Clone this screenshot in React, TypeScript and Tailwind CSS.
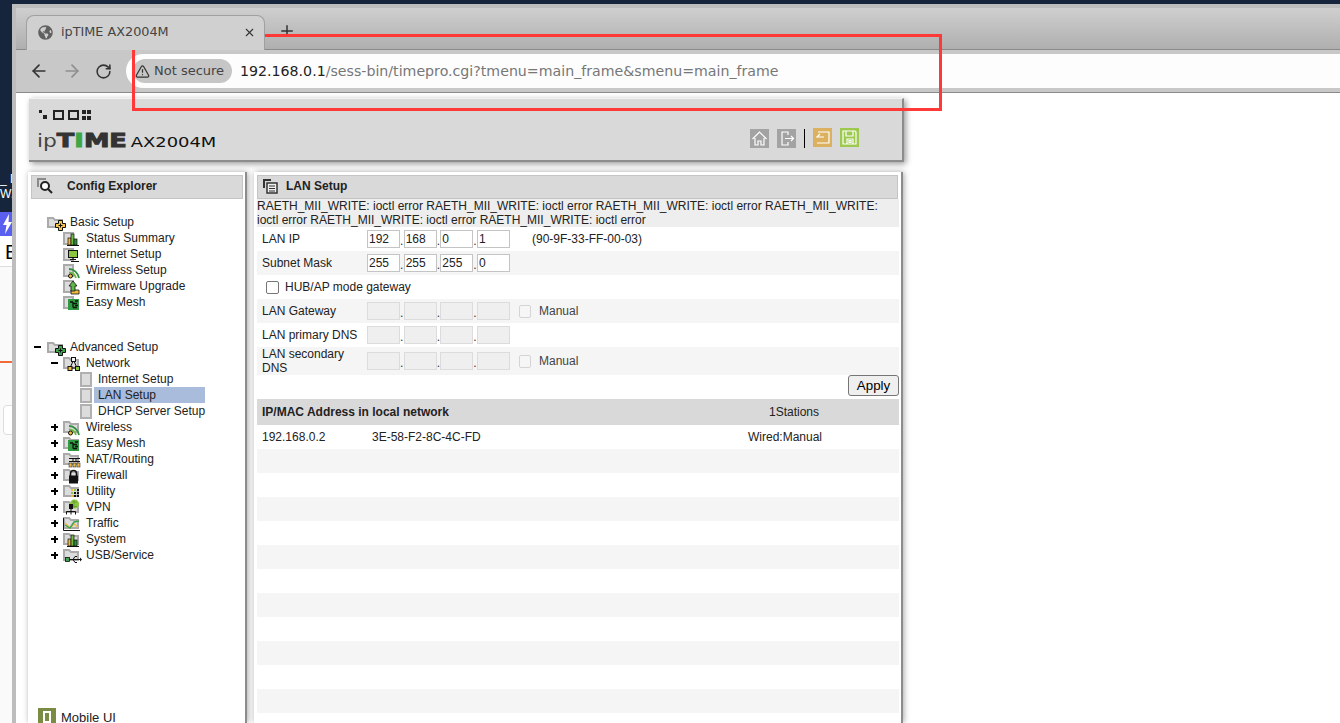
import { ArrowLeft, ArrowRight, Plus, RotateCw, TriangleAlert, X } from "lucide-react";
import { FaGlobeAmericas } from "react-icons/fa";
import type { ReactNode } from "react";

const ui = "font-['Liberation_Sans',Arial,sans-serif]";
const chrome = "font-['DejaVu_Sans',sans-serif]";

// small badges that sit on the corner of the tree folders
function Badge({ name }: { name: string }) {
  switch (name) {
    case "plus-yellow":
    case "plus-green":
      return (
        <g>
          <path
            d="M11.500 6.500h4v3h3v4h-3v3h-4v-3h-3v-4h3z"
            fill={name === "plus-yellow" ? "#f7c64a" : "#3fa34d"}
            stroke="#111"
          />
          <path d="M13.500 9.500v4M11.500 11.500h4" stroke="#111" />
        </g>
      );
    case "bars":
      return (
        <g stroke="#111" strokeWidth="0.700">
          <rect x="5" y="8" width="3" height="7" fill="#f0b840" />
          <rect x="8" y="4" width="3" height="11" fill="#6dbb45" />
          <rect x="11" y="9" width="3" height="6" fill="#2f8f3f" />
          <path d="M4 15.500h12" strokeWidth="1" />
        </g>
      );
    case "monitor":
      return (
        <g>
          <rect x="5.500" y="4.500" width="9" height="7" fill="#8cc63f" stroke="#111" />
          <path d="M10 12v1M7 13.500h6M8 15.500h8" stroke="#111" />
        </g>
      );
    case "wifi":
      return (
        <g fill="none">
          <path d="M6 7c5 0 9 4 10 9" stroke="#2f8f3f" strokeWidth="1.800" />
          <path d="M6 10.500c3 0 6 2 7 5.500" stroke="#6dbb45" strokeWidth="1.800" />
          <circle cx="7.500" cy="14" r="2" fill="#f0b840" stroke="#111" />
        </g>
      );
    case "upload":
      return (
        <g stroke="#111" strokeWidth="0.800">
          <path d="M10 12h6v4H8v-4z" fill="#f0b840" />
          <path d="M10 3l4 5h-2v5H8V8H6z" fill="#5cb848" />
        </g>
      );
    case "mesh":
      return (
        <g>
          <rect x="5" y="5" width="11" height="11" fill="#2f9a3f" />
          <path d="M7 8h3M10 8v5.500M10 9.500h4M10 13.500h4M12 7h3M12 11.500h3" stroke="#111" strokeWidth="1.300" />
        </g>
      );
    case "network":
      return (
        <g>
          <path d="M10.500 5L7 13M10.500 5L14 13M7 13h7" fill="none" stroke="#111" />
          <rect x="8.500" y="2.500" width="4" height="4" fill="#f5f5f5" stroke="#111" />
          <rect x="5" y="11.500" width="4" height="4" fill="#f0b840" stroke="#111" />
          <rect x="12.500" y="11.500" width="4" height="4" fill="#8cc63f" stroke="#111" />
        </g>
      );
    case "nat":
      return (
        <g>
          <path d="M6 7.500h11M6 10.500h11M10 7.500v3M13 7.500v3" stroke="#111" />
          <rect x="6" y="12" width="3" height="4" fill="#f0b840" stroke="#111" strokeWidth="0.500" />
          <rect x="10" y="12" width="3" height="4" fill="#f0b840" stroke="#111" strokeWidth="0.500" />
          <rect x="14" y="12" width="3" height="4" fill="#f0b840" stroke="#111" strokeWidth="0.500" />
        </g>
      );
    case "lock":
      return (
        <g>
          <path d="M7.500 9V6.500a3 3 0 016 0V9" fill="none" stroke="#111" strokeWidth="1.600" />
          <rect x="6" y="8.500" width="9" height="8" fill="#111" />
        </g>
      );
    case "dots":
      return (
        <g>
          <rect x="8" y="6" width="2" height="2" fill="#f0b840" />
          <rect x="11" y="6" width="2" height="2" fill="#8cc63f" />
          <rect x="14" y="6" width="2" height="2" fill="#111" />
          <rect x="8" y="9" width="2" height="2" fill="#8cc63f" />
          <rect x="11" y="9" width="2" height="2" fill="#111" />
          <rect x="14" y="9" width="2" height="2" fill="#111" />
          <rect x="8" y="12" width="2" height="2" fill="#f0b840" />
          <rect x="11" y="12" width="2" height="2" fill="#111" />
          <rect x="14" y="12" width="2" height="2" fill="#111" />
        </g>
      );
    case "vpn":
      return (
        <g>
          <circle cx="11.500" cy="5" r="4.500" fill="#8cc63f" />
          <path d="M8 7.500h6M9 3h5M11 1v8" stroke="#5a9a2f" strokeWidth="0.700" />
          <rect x="6" y="5" width="4" height="5" fill="#111" />
          <path d="M8 10v2M3.500 12.500h9M3.500 12.500v3M8 12.500v3M12.500 12.500v3" stroke="#111" />
        </g>
      );
    case "traffic":
      return (
        <g fill="none">
          <path d="M0.500 3v12.500H17" stroke="#111" />
          <path d="M2 8l5 5 4-4 4 3" stroke="#f0b840" strokeWidth="1.400" />
          <path d="M2 10l5 3 4-6 5-1" stroke="#3fa34d" strokeWidth="1.400" />
        </g>
      );
    case "usb":
      return (
        <g>
          <path d="M5 12.500h12M10 12.500l2-3h2M10 12.500l2 3h2" fill="none" stroke="#111" />
          <rect x="2.500" y="10.500" width="4" height="4" fill="#3fa34d" stroke="#111" strokeWidth="0.800" />
          <path d="M17 10.500l2 2-2 2z" fill="#111" />
        </g>
      );
    default:
      return null;
  }
}

const folderShapes = {
  top: "M1 4h5l2 2h7v7H1z",
  sub: "M1 3h5l2 2h7v8H1z",
  square: "M1 3h9v11H1z",
};

function FolderIcon({ badge, shape }: { badge: string; shape: keyof typeof folderShapes }) {
  return (
    <svg width="20" height="16" viewBox="0 0 20 16" className="shrink-0 overflow-visible">
      <path d={folderShapes[shape]} fill="#dcdcdc" stroke="#aaa" strokeWidth="2" />
      <Badge name={badge} />
    </svg>
  );
}

function PageIcon() {
  return <span className="w-[12px] h-[15px] shrink-0 bg-[#dcdcdc] border-2 border-[#b0b0b0]" />;
}

function Toggle({ kind }: { kind: "+" | "-" }) {
  return (
    <span className="relative w-[7px] h-[7px] shrink-0">
      <span className="absolute left-0 top-[2.500px] w-[7px] h-[2px] bg-black" />
      {kind === "+" && <span className="absolute left-[2.500px] top-0 w-[2px] h-[7px] bg-black" />}
    </span>
  );
}

const basicItems = [
  ["Status Summary", "bars"],
  ["Internet Setup", "monitor"],
  ["Wireless Setup", "wifi"],
  ["Firmware Upgrade", "upload"],
  ["Easy Mesh", "mesh"],
];

const advancedItems = [
  ["Wireless", "wifi"],
  ["Easy Mesh", "mesh"],
  ["NAT/Routing", "nat"],
  ["Firewall", "lock"],
  ["Utility", "dots"],
  ["VPN", "vpn"],
  ["Traffic", "traffic"],
  ["System", "bars"],
  ["USB/Service", "usb"],
];

function ConfigExplorer() {
  return (
    <aside className="w-[219px] shrink-0 h-[551px] bg-white flex flex-col pt-[3px] pl-[3px] border-r-2 border-[#8c8c8c] shadow-[1px_0_6px_rgba(0,0,0,0.35)]">
      <div className="h-[24px] w-[212px] shrink-0 bg-[#d9d9d9] border border-[#c4c4c4] flex items-center pl-[4px] pb-[3px]">
        <svg width="17" height="17" viewBox="0 0 17 17" className="shrink-0">
          <path d="M1 1h9v2H3v7H1z" fill="#8a8a8a" />
          <circle cx="9" cy="9" r="4" fill="#fff" stroke="#222" strokeWidth="2" />
          <path d="M12 12l4 4" stroke="#222" strokeWidth="2" />
        </svg>
        <span className="ml-[14px] text-[12px] font-bold text-[#222]">Config Explorer</span>
      </div>

      <div className="mt-[15px] flex flex-col text-[12px] leading-[16px] text-[#222]">
        <div className="h-[16px] flex items-center pl-[16px]">
          <FolderIcon badge="plus-yellow" shape="top" />
          <span className="ml-[3px]">Basic Setup</span>
        </div>
        {basicItems.map(([label, badge]) => (
          <div key={label} className="h-[16px] flex items-center pl-[32px]">
            <FolderIcon badge={badge} shape="square" />
            <span className="ml-[3px]">{label}</span>
          </div>
        ))}

        <div className="h-[16px] mt-[29px] flex items-center pl-[3px]">
          <Toggle kind="-" />
          <span className="ml-[6px]" />
          <FolderIcon badge="plus-green" shape="top" />
          <span className="ml-[3px]">Advanced Setup</span>
        </div>
        <div className="h-[16px] flex items-center pl-[20px]">
          <Toggle kind="-" />
          <span className="ml-[5px]" />
          <FolderIcon badge="network" shape="sub" />
          <span className="ml-[3px]">Network</span>
        </div>
        {["Internet Setup", "LAN Setup", "DHCP Server Setup"].map((label) => (
          <div key={label} className="h-[16px] flex items-center pl-[49px]">
            <PageIcon />
            <span className={`ml-[2px] pl-[4px] w-[111px] whitespace-nowrap ${label === "LAN Setup" ? "bg-[#a9bcdc]" : ""}`}>
              {label}
            </span>
          </div>
        ))}
        {advancedItems.map(([label, badge]) => (
          <div key={label} className="h-[16px] flex items-center pl-[20px]">
            <Toggle kind="+" />
            <span className="ml-[5px]" />
            <FolderIcon badge={badge} shape="sub" />
            <span className="ml-[3px]">{label}</span>
          </div>
        ))}
      </div>

      <div className="mt-auto pl-[7px] flex items-start h-[15px]">
        <span className="w-[18px] h-[18px] shrink-0 bg-[#7a8c44] flex justify-center pt-[3px]">
          <span className="w-[8px] h-[12px] border-2 border-white" />
        </span>
        <span className="ml-[5px] text-[13px] leading-[20px] text-[#222]">Mobile UI</span>
      </div>
    </aside>
  );
}

function OctetInputs({ values, disabled }: { values: string[]; disabled?: boolean }) {
  return (
    <div className="flex w-[143px] shrink-0 items-center">
      {values.map((v, i) => (
        <div key={i} className="flex items-end">
          {i > 0 && <span className="w-[3.660px] text-[12px] leading-[14px] text-[#333]">.</span>}
          <input
            readOnly
            value={v}
            className={`w-[33px] h-[18px] px-[1px] text-[12px] text-[#222] outline-none ${ui} ${
              disabled ? "bg-[#efefef] border border-[#dcdcdc]" : "bg-white border border-[#c4c4c4]"
            }`}
          />
        </div>
      ))}
    </div>
  );
}

function ManualBox() {
  return (
    <div className="flex items-center ml-[9px]">
      <span className="w-[12px] h-[13px] rounded-[2px] border border-[#d4d4d4] bg-[#f6f6f6]" />
      <span className="ml-[8px] text-[#444]">Manual</span>
    </div>
  );
}

function FormRow({ label, tall, shaded, children }: { label: string; tall?: boolean; shaded?: boolean; children?: ReactNode }) {
  return (
    <div className={`flex items-center pl-[5px] ${tall ? "h-[28px]" : "h-[24px]"} ${shaded ? "bg-[#f5f5f5]" : "bg-white"}`}>
      <span className="w-[105px] shrink-0 leading-[14px]">{label}</span>
      {children}
    </div>
  );
}

const errorText = Array.from({ length: 6 }, () => "RAETH_MII_WRITE: ioctl error").join(" ");

function LanSetup() {
  const emptyRows = Array.from({ length: 12 }, (_, i) => i);
  return (
    <section className="w-[649px] shrink-0 h-[551px] bg-white pt-[3px] pl-[3px] overflow-hidden border-r-2 border-[#8c8c8c] shadow-[1px_0_6px_rgba(0,0,0,0.35)] text-[12px] text-[#222]">
      <div className="w-[642px] flex flex-col">
        <div className="h-[24px] w-[641px] bg-[#d9d9d9] border border-[#c4c4c4] flex items-center pl-[4px] pb-[3px]">
          <svg width="16" height="16" viewBox="0 0 16 16" className="shrink-0">
            <path d="M1 1h8v2H3v7H1z" fill="#333" />
            <rect x="5" y="5" width="10" height="10" fill="#eee" stroke="#333" strokeWidth="1.500" />
            <path d="M7 8h6M7 10.500h6M7 13h6" stroke="#333" />
          </svg>
          <span className="ml-[8px] font-bold">LAN Setup</span>
        </div>
        <div className="h-[28px] bg-[#eeeeee] text-[12px] leading-[14px]">{errorText}</div>

        <FormRow label="LAN IP">
          <OctetInputs values={["192", "168", "0", "1"]} />
          <span className="ml-[22px]">(90-9F-33-FF-00-03)</span>
        </FormRow>
        <FormRow label="Subnet Mask" shaded>
          <OctetInputs values={["255", "255", "255", "0"]} />
        </FormRow>
        <div className="h-[24px] flex items-center pl-[9px] bg-white">
          <span className="w-[13px] h-[13px] rounded-[2px] border border-[#767676] bg-white" />
          <span className="ml-[6px]">HUB/AP mode gateway</span>
        </div>
        <FormRow label="LAN Gateway" shaded>
          <OctetInputs values={["", "", "", ""]} disabled />
          <ManualBox />
        </FormRow>
        <FormRow label="LAN primary DNS">
          <OctetInputs values={["", "", "", ""]} disabled />
        </FormRow>
        <FormRow label="LAN secondary DNS" tall shaded>
          <OctetInputs values={["", "", "", ""]} disabled />
          <ManualBox />
        </FormRow>

        <div className="h-[24px] flex justify-end items-start bg-white">
          <button className="w-[51px] h-[21px] rounded-[3px] border border-[#767676] bg-[#efefef] text-[13.33px] leading-none text-black">
            Apply
          </button>
        </div>

        <div className="h-[26px] flex items-center bg-[#d9d9d9] pl-[5px]">
          <span className="w-[507px] font-bold">IP/MAC Address in local network</span>
          <span>1Stations</span>
        </div>
        <div className="h-[24px] flex items-center bg-white pl-[5px]">
          <span className="w-[110px]">192.168.0.2</span>
          <span className="w-[376px]">3E-58-F2-8C-4C-FD</span>
          <span>Wired:Manual</span>
        </div>
        {emptyRows.map((i) => (
          <div key={i} className={`h-[24px] shrink-0 ${i % 2 === 0 ? "bg-[#f5f5f5]" : "bg-white"}`} />
        ))}
      </div>
    </section>
  );
}

function HeaderIcon({ color, children }: { color: string; children: ReactNode }) {
  return (
    <span className={`w-[19px] h-[19px] shrink-0 flex items-center justify-center ${color}`}>
      <svg width="19" height="19" viewBox="0 0 19 19" fill="none" stroke="#fff" strokeWidth="1.200">
        {children}
      </svg>
    </span>
  );
}

function LogoHeader() {
  return (
    <header className="ml-[1px] w-[875px] h-[64px] shrink-0 bg-[#d9d9d9] border-t border-r-2 border-b-2 border-[#8c8c8c] border-t-[#f2f2f2] shadow-[2px_2px_6px_rgba(0,0,0,0.4)] flex justify-between pl-[8px] pr-[43px]">
      <div className="flex flex-col">
        <svg width="54" height="12" viewBox="0 0 54 12" className="mt-[10px] ml-[2px]" fill="#222">
          <rect x="0" y="1" width="3" height="3" />
          <rect x="4" y="6" width="4" height="4" />
          <path fillRule="evenodd" d="M14 1h11v10H14zM16 3v6h7V3zM29 1h11v10H29zM31 3v6h7V3z" />
          <rect x="43" y="1" width="4" height="4" />
          <rect x="48" y="1" width="4" height="4" />
          <rect x="43" y="7" width="4" height="4" />
          <rect x="48" y="7" width="4" height="4" />
        </svg>
        <div className={`mt-[7px] flex items-baseline origin-left scale-x-[1.28] whitespace-nowrap ${chrome}`}>
          <span className="text-[17px] leading-[24px] text-[#444]">ip</span>
          <span className="text-[20px] leading-[24px] font-bold text-[#333] [-webkit-text-stroke:1px_#333]">
            T<span className="text-[#3fa648] [-webkit-text-stroke:1px_#3fa648]">I</span>ME
          </span>
          <span className="ml-[3px] text-[14px] leading-[24px] text-[#111]">AX2004M</span>
        </div>
      </div>
      <div className="flex items-start pt-[29px]">
        <div className="flex mt-[1px]">
          <HeaderIcon color="bg-[#a3a3a3]">
            <path d="M2.500 10l7-7 7 7M5 9v7h3v-4h3v4h3V9" />
          </HeaderIcon>
        </div>
        <div className="flex mt-[1px] ml-[8px]">
          <HeaderIcon color="bg-[#a3a3a3]">
            <path d="M11 6V3H5v13h6v-3M8 9.500h8M14 7l2.500 2.500L14 12" />
          </HeaderIcon>
        </div>
        <span className="w-[1px] h-[19px] mt-[1px] mx-[8px] bg-black" />
        <HeaderIcon color="bg-[#dbb05f]">
          <path d="M5 4h11v11H4M7 6L4 9h7" />
        </HeaderIcon>
        <div className="ml-[8px]">
          <HeaderIcon color="bg-[#9dc94f]">
            <path d="M3 3h12l1 1v12H3zM6 3v5h7V3M7 16v-5h6v5M9 12.500h2v2H9z" />
          </HeaderIcon>
        </div>
      </div>
    </header>
  );
}

function BrowserChrome() {
  return (
    <div className={`shrink-0 ${chrome}`}>
      <div className="h-[42px] flex items-end pl-[10px] border-b border-[#8a8a8a] bg-gradient-to-b from-[#cfcfcf] to-[#afafaf]">
        <div className="relative z-10 -mb-[1px] h-[35px] w-[239px] bg-[#d0d0d0] border border-b-0 border-[#a0a0a0] rounded-t-[8px] flex items-center pl-[11px] pr-[8px] pb-[2px]">
          <FaGlobeAmericas className="w-[15px] h-[15px] text-[#606060] shrink-0" />
          <span className="ml-[8px] text-[12.800px] text-[#444] whitespace-nowrap">ipTIME AX2004M</span>
          <X className="ml-auto w-[13px] h-[13px] text-[#333]" strokeWidth={2} />
        </div>
        <Plus className="ml-[13px] mb-[9px] w-[18px] h-[18px] text-[#333]" strokeWidth={2} />
      </div>
      <div className="h-[43px] bg-[#c8c8c8] border-b border-[#8a8a8a] flex items-center">
        <ArrowLeft className="ml-[13px] w-[20px] h-[20px] text-[#333]" strokeWidth={2} />
        <ArrowRight className="ml-[13px] w-[20px] h-[20px] text-[#8e8e8e]" strokeWidth={2} />
        <RotateCw className="ml-[13px] w-[17px] h-[17px] text-[#333]" strokeWidth={2.200} />
        <div className="ml-[14px] flex-1 h-[34px] bg-[#fdfdfd] rounded-l-full flex items-center pl-[7px]">
          <div className="h-[24px] w-[99px] rounded-full bg-[#c6c6c6] flex items-center pl-[2px]">
            <TriangleAlert className="w-[15px] h-[15px] text-[#333]" strokeWidth={2} />
            <span className="ml-[4px] text-[13px] text-[#444] whitespace-nowrap">Not secure</span>
          </div>
          <span className="ml-[8px] mt-[1px] text-[14.180px] text-[#777] whitespace-nowrap">
            <span className="text-[#222]">192.168.0.1</span>/sess-bin/timepro.cgi?tmenu=main_frame&amp;smenu=main_frame
          </span>
        </div>
      </div>
    </div>
  );
}

function DesktopStrip() {
  return (
    <div className={`w-[12px] shrink-0 h-[723px] flex flex-col overflow-hidden ${ui}`}>
      <div className="h-[212px] shrink-0 bg-[#16253b] pt-[172px] text-white text-[12px] leading-[15px] whitespace-nowrap">
        <div>_ D</div>
        <div>W.</div>
      </div>
      <div className="h-[24px] shrink-0 bg-[#5a5ff0] flex items-center justify-end">
        <svg width="9" height="20" viewBox="0 0 9 20" fill="#fff" className="shrink-0">
          <path d="M6 0L0 11h3.500L2 20l7-12H5.500z" />
        </svg>
      </div>
      <div className="h-[31px] shrink-0 bg-white text-black text-[20px] leading-[32px] pl-[5px] border-b border-[#ddd]">E</div>
      <div className="flex-1 bg-[#fafafa] flex flex-col">
        <div className="mt-[94px] h-[2px] bg-[#f26a3a]" />
        <div className="mt-[42px] ml-[3px] h-[30px] w-[20px] rounded-[4px] border border-[#ddd] bg-white" />
      </div>
    </div>
  );
}

export default function App() {
  return (
    <div className="relative w-[1340px] h-[723px] overflow-hidden flex bg-[#16253b]">
      <DesktopStrip />
      <div className="flex-1 flex flex-col mt-[4px] border-l-[4px] border-t-[4px] border-[#bdbdbd] bg-white min-w-0">
        <BrowserChrome />
        <div className={`flex-1 min-h-0 bg-white pl-[12px] pt-[5px] overflow-hidden ${ui}`}>
          <LogoHeader />
          <div className="mt-[10px] flex gap-[7px]">
            <ConfigExplorer />
            <LanSetup />
          </div>
        </div>
      </div>
      {/* annotation drawn over the screenshot */}
      <div className="absolute left-[132px] top-[34px] w-[810px] h-[77px] border-[3px] border-[#ff3838]" />
    </div>
  );
}
